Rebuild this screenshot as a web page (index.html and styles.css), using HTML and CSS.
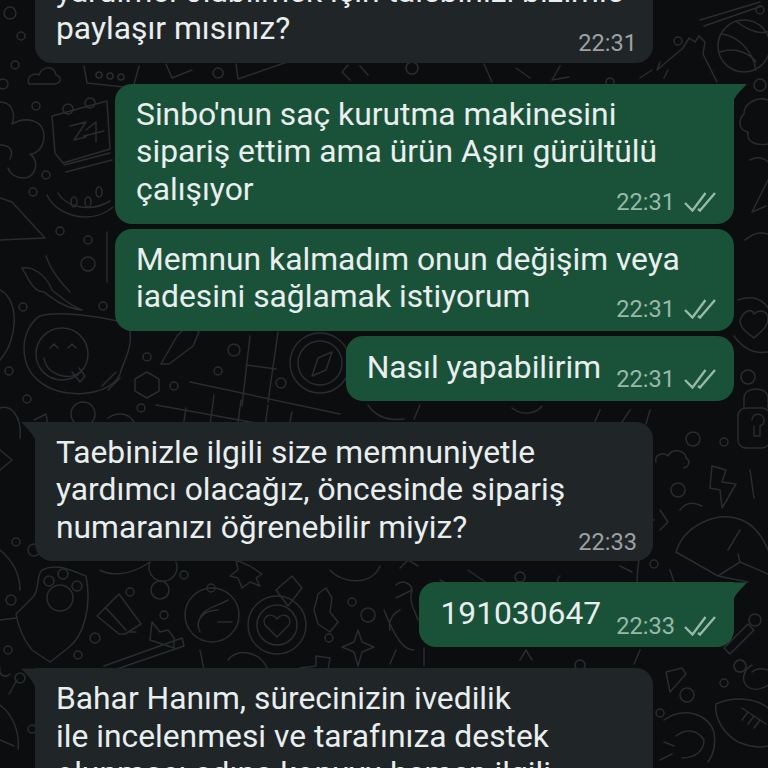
FILE: index.html
```html
<!DOCTYPE html>
<html lang="tr">
<head>
    <meta charset="UTF-8">
    <meta name="viewport" content="width=device-width, initial-scale=1.0">
    <title>Sohbet</title>
    <link rel="stylesheet" href="styles.css">
</head>
<body>
<div class="chat">
    <!-- duvar kagidi -->
    <svg class="wallpaper" width="768" height="768" viewBox="0 0 768 768" fill="none" stroke="#2a2d2f" stroke-width="1.5" stroke-linejoin="round" stroke-linecap="round">
        <!-- sol ust -->
        <circle cx="10" cy="13" r="6"/><circle cx="21" cy="36" r="4"/><circle cx="15" cy="65" r="4"/><circle cx="3" cy="84" r="5"/>
        <path d="M29 84c-3-7 4-12 10-9 3-9 15-10 17 0 5 1 6 8-1 9z"/>
        <path d="M84 66l3 17 46 5 6-22"/><circle cx="99" cy="75" r="3"/><circle cx="110" cy="76" r="3"/><circle cx="121" cy="77" r="3"/>
        <circle cx="36" cy="106" r="4"/>
        <path d="M52 116l55-15 3 48-47 14-8-10z"/><circle cx="68" cy="109" r="5"/><circle cx="90" cy="103" r="5"/>
        <path d="M70 126l16-4-12 18 12-3M86 130l10-8v20M84 136l20-5"/>
        <path d="M64 165l46-12M66 172l46-12"/>
        <path d="M47 195c10 22 45 30 66 12M58 193c8 14 32 20 52 8"/><ellipse cx="74" cy="202" rx="3" ry="5"/><ellipse cx="88" cy="202" rx="3" ry="5"/><ellipse cx="99" cy="192" rx="3" ry="5"/>
        <path d="M0 102c12 0 16 12 12 22 14-8 32-4 32 12 0 12-8 18-14 18 10 6 6 24-6 24-8 0-14-4-16-10M0 145c10 0 14 6 10 14"/>
        <path d="M0 198l12 4 33 36-45 2"/><circle cx="33" cy="192" r="4"/><circle cx="46" cy="175" r="4"/><circle cx="60" cy="231" r="4"/><circle cx="88" cy="240" r="4"/>
        <!-- ust orta, sag -->
        <path d="M166 64l6 14 20-8 M236 64l2 15 52-18M218 68a5 5 0 1 0 .1 0"/><path d="M350 80l-8-8 6-7M360 66l8 9M412 62a6 6 0 1 0 .1 0"/>
        <path d="M492 82l-8-18 M530 78l-14-10M560 66l-8 14 17-3M610 78a4 4 0 1 0 .1 0M640 78l12-8"/>
        <path d="M660 62l-3 8 26-22 6-10 6 4 4-6 6 6-2 12 14 28M664 78l4-8"/><circle cx="678" cy="41" r="4"/>
        <circle cx="744" cy="46" r="26"/><path d="M722 34c14 2 30 14 34 36M736 21c12 10 26 14 33 10M720 52c18-6 32 4 36 10"/>
        <path d="M700 20l60-18M704 26l58-20"/><circle cx="760" cy="10" r="4"/>
        <circle cx="760" cy="85" r="6"/>
        <path d="M768 100c-12-4-24 4-24 14-6 6-6 16 4 18-2 10 8 14 20 12M750 160c8-4 14-2 18 2M768 180l-16 32 14-6M745 240c10-8 16-8 23-6"/>
        <!-- piper, surahi -->
        <path d="M22 268c10-2 24 6 30 22 8 6 18 16 30 20 -18-2-30-12-38-18-10 0-14-10-22-24z"/><path d="M46 256c4 12 14 26 24 36"/>
        <circle cx="88" cy="264" r="7"/><circle cx="23" cy="307" r="4"/><circle cx="103" cy="306" r="4"/>
        <path d="M107 232v50"/><path d="M0 290c20 10 18 50 0 70"/>
        <!-- gulen yuz -->
        <path d="M40 316c22-6 70 2 88 8 8 20-6 40-8 50-8 20-50 26-74 12-14-8-22-20-22-38 0-14 8-28 16-32z"/>
        <circle cx="62" cy="354" r="26"/><path d="M44 358c2 16 24 24 36 14"/><path d="M50 348l4-4 4 4M68 348l4-4 4 4"/>
        <path d="M72 372l8 10 5-6-6-8M102 386l14-14M108 390l12-12"/>
        <circle cx="9" cy="371" r="4"/><circle cx="27" cy="399" r="4"/>
        <path d="M161 364l16-28 12-12 10 8-6 14-24 18zM190 326l18-12"/>
        <circle cx="147" cy="357" r="4"/><circle cx="218" cy="371" r="4"/><circle cx="234" cy="350" r="6"/>
        <path d="M147 372l12 7v12l-12 7-12-7v-12z"/><circle cx="174" cy="386" r="4"/>
        <path d="M250 336l-8 70M278 332l-10 70M246 365l30 4"/>
        <path d="M190 382l150 32M186 408l-4 26M214 395l-4 30M241 400l-4 30M268 405l-4 30M156 405l100 18M292 412l-6 30"/>
        <circle cx="320" cy="363" r="30"/><circle cx="320" cy="363" r="22"/><path d="M332 352l-6 18-14 6 6-18z"/><circle cx="281" cy="383" r="5"/>
        <circle cx="141" cy="408" r="4"/><circle cx="83" cy="414" r="12"/><path d="M108 418c8-6 20-6 26 4M34 420l12-6 2 12"/>
        <path d="M0 408c12-4 22 10 20 30M0 450l12 10-12 10"/>
        <!-- sag orta -->
        <path d="M740 320c4-10 12-12 14-6 6-6 14-2 14 4 0 10-8 14-14 20-8-6-14-10-14-18z"/>
        <path d="M738 300c22-8 30 8 30 8M734 336c10 14 22 18 34 16"/><circle cx="748" cy="377" r="7"/>
        <rect x="738" y="408" width="32" height="40" rx="8"/><path d="M744 408v-10c0-12 24-12 24 0v10M752 420a6 6 0 1 1 8 6v10h-6v-10"/>
        <circle cx="693" cy="439" r="7"/><circle cx="724" cy="442" r="4"/>
        <path d="M656 462c-2-8 8-10 12-6 4-8 18-6 18 2 4 2 4 8-2 10"/><path d="M712 466l14 4-4 12 14 2-14 24-2-18-10-2z"/>
        <circle cx="678" cy="490" r="7"/><path d="M750 470l4 28M680 510c6-8 14-8 22-4"/>
        <path d="M368 405c8 12 20 16 36 14M420 405l-6 14M512 408c10 8 24 6 30-2M600 410l-6 14M630 410l-8 12M650 410l-4 14"/>
        <!-- pati kalkani -->
        <path d="M42 570c16-8 32 2 44 6 6 30-2 60-18 72l-18 14-18-12c-8-10-14-24-16-36l18-18c6-10 2-20 8-26z"/>
        <circle cx="60" cy="598" r="13"/><circle cx="49" cy="581" r="5"/><circle cx="63" cy="574" r="5"/><circle cx="77" cy="586" r="5"/>
        <circle cx="16" cy="542" r="4"/><circle cx="34" cy="550" r="6"/><circle cx="11" cy="600" r="5"/><circle cx="8" cy="650" r="4"/><circle cx="78" cy="655" r="4"/><circle cx="95" cy="638" r="5"/><circle cx="130" cy="592" r="4"/><circle cx="164" cy="615" r="4"/>
        <path d="M0 550c12 10 20 22 20 40M0 620l16-2"/>
        <path d="M97 616l22-22 22 30-16 10-6 0zM106 608l20 22"/><path d="M130 632l6 0"/>
        <path d="M150 640l2-18 8 10 8-2 6 8v10zM104 666l78-28 2 8-76 26"/>
        <path d="M100 570c10 6 30 6 50-8M150 562a14 14 0 1 0 26 0"/><circle cx="160" cy="590" r="9"/><circle cx="184" cy="575" r="4"/><circle cx="211" cy="588" r="4"/>
        <path d="M250 566l12 8-6 4 4 8-10-4-8 6-4-10-8-2 8-6-2-10z"/><path d="M276 590l16-14 10 12-14 18z"/>
        <circle cx="212" cy="615" r="27"/><path d="M200 632c-6-12 4-22 18-22M228 600c-10 6-24 8-28 18M218 622h14"/>
        <path d="M200 650l4 20M228 660c8-12 32-10 40 10"/>
        <circle cx="277" cy="625" r="29"/><circle cx="277" cy="625" r="20"/><path d="M277 637l-12-12c-4-8 6-14 12-6 6-8 16-2 12 6z"/>
        <path d="M318 594l8-6 6 10-2 14 8 10-8 10-12-8-4-14z"/><circle cx="352" cy="602" r="4"/><circle cx="368" cy="615" r="7"/><circle cx="329" cy="638" r="4"/>
        <path d="M358 630l4 12 12 5-12 5-4 14-4-14-12-5 12-5z"/><path d="M300 668l16-2v-10l14 2-2 12"/>
        <path d="M330 570c12 14 42 16 50-4"/>
        <path d="M400 568l8-8 10 6M440 580l12 6-4 10M468 570l20 14-8 2M520 572a5 5 0 1 0 .1 0M560 576c-8 6 8 24 16 12M620 566l12 6M580 660a5 5 0 1 0 .1 0M640 556c-6 20 0 36-4 60"/>
        <path d="M412 590c-4 14 4 22 6 30M396 585c6-6 14-2 16 4M396 598l16-8M396 650l-6 14M424 648v18M520 660l6-10 6 10M640 650l-6 14"/>
        <path d="M400 610c-8 4-12 12-10 20M384 610c12 30 20 40 30 40"/>
        <!-- sapka, top -->
        <path d="M676 552c8-26 40-42 66-32 14 6 22 20 26 30M676 552l42 24 22-14-2-8M740 562l28 12M718 576l30 6M740 530l-12 20"/>
        <path d="M660 510l8 12-8 8M640 522l14-2"/><circle cx="654" cy="564" r="4"/><path d="M670 570l4 12"/>
        <path d="M724 648l24-24 6 6-24 24zM740 660a6 6 0 1 0 .1 0"/><circle cx="755" cy="620" r="6"/>
        <path d="M666 672l16-4 4 6-16 18zM752 665c-8 4-12 16-4 22 6 4 14 2 20-2M752 672c4-4 10-4 16-2"/>
        <circle cx="724" cy="683" r="4"/><circle cx="687" cy="695" r="7"/><circle cx="660" cy="713" r="4"/>
        <path d="M716 704c18-8 40-6 52 4M716 704c-2 14 8 30 22 38 10 4 22 6 30 4M742 708l24 16M748 712l-6 8M754 716l-6 8M760 720l-6 8"/>
        <path d="M664 720c20-14 44-6 50 12 2 12 0 22-6 30M676 736c10-8 22-6 28 4 0 10-8 18-22 18M664 742l10 4M660 760l12-6"/>
        <path d="M0 668c-2 8 6 10 10 6M17 680l-8 14M0 705c14 10 20 30 18 44M0 740l14 6"/><circle cx="20" cy="678" r="5"/><circle cx="32" cy="729" r="4"/>
    </svg>

    <div class="msg in">
        <div class="text">yardımcı olabilmek için talebinizi bizimle<br>paylaşır mısınız?</div>
        <div class="meta"><span class="time">22:31</span></div>
    </div>

    <div class="msg out tail">
        <div class="text">Sinbo'nun saç kurutma makinesini<br>sipariş ettim ama ürün Aşırı gürültülü<br>çalışıyor</div>
        <div class="meta">
            <span class="time">22:31</span>
            <svg class="ticks" viewBox="0 0 32 20" fill="none" stroke="currentColor" stroke-width="2.4"><path d="M1 11l7.5 7.5L21.5 1M14 17l2 1.5L31 1"/></svg>
        </div>
    </div>
    <div class="msg out near">
        <div class="text">Memnun kalmadım onun değişim veya<br>iadesini sağlamak istiyorum</div>
        <div class="meta">
            <span class="time">22:31</span>
            <svg class="ticks" viewBox="0 0 32 20" fill="none" stroke="currentColor" stroke-width="2.4"><path d="M1 11l7.5 7.5L21.5 1M14 17l2 1.5L31 1"/></svg>
        </div>
    </div>
    <div class="msg out near row">
        <div class="text">Nasıl yapabilirim</div>
        <div class="meta">
            <span class="time">22:31</span>
            <svg class="ticks" viewBox="0 0 32 20" fill="none" stroke="currentColor" stroke-width="2.4"><path d="M1 11l7.5 7.5L21.5 1M14 17l2 1.5L31 1"/></svg>
        </div>
    </div>

    <div class="msg in tail">
        <div class="text">Taebinizle ilgili size memnuniyetle<br>yardımcı olacağız, öncesinde sipariş<br>numaranızı öğrenebilir miyiz?</div>
        <div class="meta"><span class="time">22:33</span></div>
    </div>

    <div class="msg out tail row">
        <div class="text">191030647</div>
        <div class="meta">
            <span class="time">22:33</span>
            <svg class="ticks" viewBox="0 0 32 20" fill="none" stroke="currentColor" stroke-width="2.4"><path d="M1 11l7.5 7.5L21.5 1M14 17l2 1.5L31 1"/></svg>
        </div>
    </div>

    <div class="msg in tail">
        <div class="text">Bahar Hanım, sürecinizin ivedilik<br>ile incelenmesi ve tarafınıza destek<br>olunması adına konuyu hemen ilgili</div>
    </div>
</div>
</body>
</html>
```

FILE: styles.css
```css
html, body {
    margin: 0;
    padding: 0;
    height: 100%;
    background: #0b0d0f;
}
.chat {
    position: relative;
    width: 768px;
    height: 768px;
    overflow: hidden;
    box-sizing: border-box;
    padding: 0 34px 0 35px;
    display: flex;
    flex-direction: column;
    font-family: Roboto, "Noto Sans", sans-serif;
}
.wallpaper {
    position: absolute;
    top: 0;
    left: 0;
}
.msg {
    position: relative;
    box-sizing: border-box;
    flex-shrink: 0;
    padding: 12px 18px 15.5px 21px;
    margin-top: 21px;
    border-radius: 17px;
    color: #e9eeee;
    font-size: 31.8px;
    line-height: 37.4px;
}
.msg:first-of-type {
    margin-top: -39.5px;
}
.in {
    align-self: flex-start;
    width: 618px;
    background: #202527;
}
.out {
    align-self: flex-end;
    width: 619px;
    background: #1a5239;
}
.near {
    margin-top: 5px;
}
.row {
    width: auto;
    padding-top: 13px;
    padding-bottom: 14.5px;
    display: flex;
    align-items: flex-end;
}
.meta {
    display: flex;
    justify-content: flex-end;
    align-items: center;
    gap: 9px;
    height: 26px;
    margin: -19px 0 -7px;
    font-size: 23.6px;
    line-height: 26px;
}
.row .meta {
    margin: 0 0 -6px 15px;
}
.in .meta {
    margin: -17px -2px -9px 0;
    color: #9da1a3;
}
.out .meta {
    color: #97b9a8;
}
.ticks {
    width: 32px;
    height: 20px;
}
.tail.in {
    border-top-left-radius: 0;
}
.tail.out {
    border-top-right-radius: 0;
}
.tail::before {
    content: "";
    position: absolute;
    top: 0;
    width: 14px;
    height: 18px;
}
.tail.out::before {
    right: -13px;
    background: #1a5239;
    clip-path: path("M0 0H14C10 5 4 9 0 18Z");
}
.tail.in::before {
    left: -14px;
    background: #202527;
    clip-path: path("M0 0H14V18C10 9 4 5 0 0Z");
}
```
